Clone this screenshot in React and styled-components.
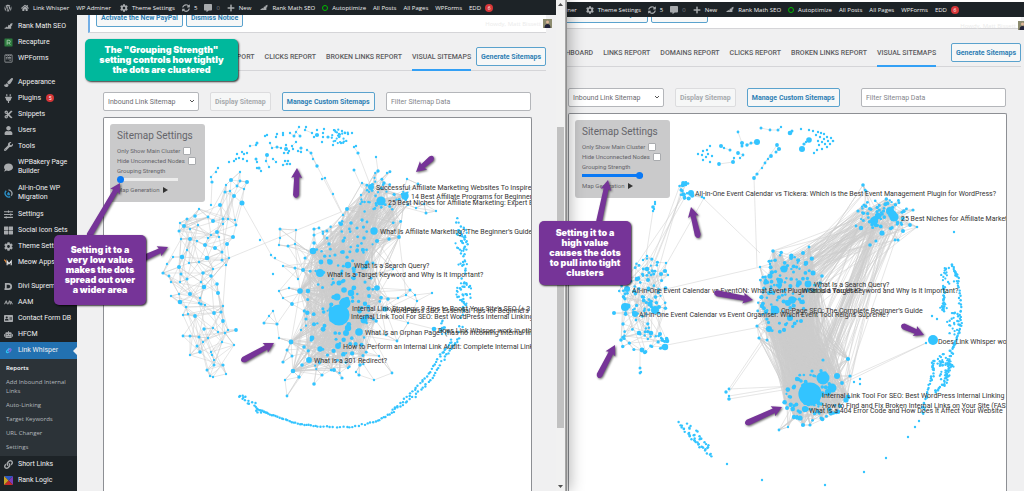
import React from 'react'
import styled, { createGlobalStyle, css } from 'styled-components'
import {
  FaWordpress,
  FaHome,
  FaCog,
  FaSyncAlt,
  FaCommentAlt,
  FaPlus,
  FaPaintBrush,
  FaPlug,
  FaCut,
  FaUser,
  FaWrench,
  FaComment,
  FaSlidersH,
  FaThLarge,
  FaRobot,
  FaLink,
  FaWpforms,
  FaAddressCard,
} from 'react-icons/fa'

const BLUE = '#33c4ff'
const PURPLE = '#763498'

const GlobalStyle = createGlobalStyle`
  * {
    box-sizing: border-box;
  }

  body {
    margin: 0;
    background: #fff;
    font-family: Roboto, 'Liberation Sans', sans-serif;
    font-size: 7px;
    color: #50575e;
  }

  a {
    color: inherit;
    text-decoration: none;
  }
`

const Desktop = styled.div`
  position: relative;
  display: flex;
  height: 100vh;
  min-height: 491px;
  overflow: hidden;
`

const FrontWindow = styled.section`
  position: relative;
  z-index: 1;
  flex: 0 0 566px;
  display: flex;
  flex-direction: column;
  min-width: 0;
  background: #f0f0f1;
  border-right: 1px solid #a6a6a6;
  box-shadow: 1px 0 0 #8f8f8f, 4px 0 14px rgba(0, 0, 0, 0.3);
`

const BackWindow = styled.section`
  flex: 1;
  display: flex;
  flex-direction: column;
  min-width: 0;
  overflow: hidden;
  padding-top: 2px;
  background: #fff;
`

const BackPage = styled.div`
  flex: 1;
  display: flex;
  flex-direction: column;
  min-height: 0;
  margin: 0 -7px 0 -24px;
`

const WindowBody = styled.div`
  flex: 1;
  display: flex;
  min-width: 0;
  min-height: 0;
`

const AdminBar = styled.header`
  display: flex;
  flex-shrink: 0;
  align-items: center;
  gap: 7px;
  height: 15px;
  padding: 0 4px 0 ${({ $clipped }) => ($clipped ? 0 : 4)}px;
  background: #1d2327;
  color: #f0f0f1;
  font-family: 'Open Sans', 'Noto Sans', sans-serif;
  font-size: 6px;
  white-space: nowrap;
`

const BarItem = styled.a`
  display: flex;
  align-items: center;
  gap: 4px;
  margin-left: ${({ $space }) => $space || 0}px;

  svg {
    color: #a7aaad;
    width: 8px;
    height: 8px;
  }
`

const Dim = styled.span`
  color: #7c8085;
`

const Ring = styled.span`
  width: 6px;
  height: 6px;
  border: 1px solid #0b0;
  border-radius: 50%;
`

const Badge = styled.span`
  display: inline-flex;
  align-items: center;
  justify-content: center;
  width: 8px;
  height: 8px;
  border-radius: 50%;
  background: #d63638;
  color: #fff;
  font-size: 5px;
`

const Sidebar = styled.nav`
  flex: 0 0 77px;
  padding-top: 3px;
  background: #1d2327;
  color: #f0f0f1;
`

const MenuLink = styled.a`
  display: flex;
  position: relative;
  align-items: center;
  gap: 5px;
  min-height: ${({ $active }) => ($active ? 17 : 16)}px;
  margin-top: ${({ $separated }) => ($separated ? 8 : 0)}px;
  padding: ${({ $wrap }) => ($wrap ? 4 : 3)}px 4px;
  line-height: 9px;
  white-space: ${({ $wrap }) => ($wrap ? 'normal' : 'nowrap')};

  > svg {
    flex-shrink: 0;
    width: 9px;
    height: 9px;
    color: #a7aaad;
  }

  ${({ $active }) =>
    $active &&
    css`
      background: #2271b1;

      &::after {
        content: '';
        position: absolute;
        right: 0;
        border: 4px solid transparent;
        border-right-color: #f0f0f1;
        border-left-width: 0;
      }
    `}
`

const Submenu = styled.div`
  padding: 3px 6px 1px;
  background: #2c3338;
  color: #b4b9be;
  font-family: 'Open Sans', 'Noto Sans', sans-serif;
  font-size: 6px;
`

const SubLink = styled.a`
  display: block;
  padding: 2px 0 3px;
  line-height: 9px;
  color: ${({ $current }) => ($current ? '#fff' : 'inherit')};
  font-weight: ${({ $current }) => ($current ? 600 : 400)};
`

const Main = styled.main`
  position: relative;
  flex: 1;
  display: flex;
  flex-direction: column;
  min-width: 0;
  background: #f0f0f1;
`

const Notice = styled.div`
  display: flex;
  flex-shrink: 0;
  align-items: flex-end;
  gap: 3px;
  height: ${({ $scrolled }) => ($scrolled ? 12 : 18)}px;
  margin: 0 10px 0 11px;
  padding: 0 0 5px 6px;
  overflow: hidden;
  background: #fff;
  border-left: 2px solid #72aee6;
  border-bottom: 1px solid #d5d5d8;
`

const Button = styled.button`
  flex-shrink: 0;
  height: 19px;
  padding: 0 4px;
  background: #f6f7f7;
  border: 1px solid #5aa2cd;
  border-radius: 2px;
  color: #2e7fb4;
  font: 700 7px Roboto, sans-serif;
  white-space: nowrap;

  &:disabled {
    border-color: #dcdcde;
    color: #a7aaad;
  }
`

const Account = styled.a`
  position: absolute;
  top: 4px;
  right: 4px;
  display: flex;
  align-items: center;
  gap: 2px;
  color: #ebebeb;
  font-family: 'Open Sans', sans-serif;
  font-size: 6px;
`

const TabRow = styled.div`
  display: flex;
  flex-shrink: 0;
  align-items: flex-start;
  justify-content: space-between;
  height: 24px;
  margin: 14px 10px 0;
  border-bottom: 1px solid #d5d5d8;
`

const Tabs = styled.nav`
  display: flex;
  gap: 10px;
  height: 24px;
  color: #5c5c60;
  font-weight: 500;
  line-height: 21px;
  white-space: nowrap;
`

const Tab = styled.a`
  border-bottom: 2px solid ${({ $active }) => ($active ? '#33a0f5' : 'transparent')};
`

const Controls = styled.form`
  display: flex;
  flex-shrink: 0;
  align-items: center;
  gap: 11px;
  margin: 21px 25px 0 26px;
`

const fieldStyle = css`
  height: 19px;
  background-color: #fff;
  border: 1px solid #b4b6ba;
  border-radius: 2px;
  color: #6b6b70;
  font: 400 7px Roboto, sans-serif;
`

const Select = styled.select`
  ${fieldStyle}
  width: 96px;
  padding: 0 4px;
  appearance: none;
`

const SelectBox = styled.div`
  position: relative;
  display: flex;

  svg {
    position: absolute;
    top: 7px;
    right: 4px;
  }
`

const Filter = styled.input`
  ${fieldStyle}
  width: 145px;
  margin-left: auto;
  padding: 0 4px;

  &::placeholder {
    color: #85868b;
  }
`

const MapFrame = styled.div`
  position: relative;
  flex: 1;
  min-height: 0;
  margin: 6px 24px 0 26px;
  overflow: hidden;
  background: #fff;
  border: 1px solid #8d8f94;
  border-bottom: 0;
  border-radius: 2px 2px 0 0;

  > svg {
    display: block;
    width: 100%;
    height: 100%;
  }
`

const Panel = styled.div`
  position: absolute;
  top: 6px;
  left: 6px;
  display: flex;
  flex-direction: column;
  width: 95px;
  height: 78px;
  padding: 6px 0 0 7px;
  background: #cacacb;
  border-radius: 3px;
  color: #65656a;
  font-size: 6px;
  line-height: 10px;
`

const PanelTitle = styled.h2`
  margin: 0 0 4px;
  font-size: 10px;
  font-weight: 400;
  line-height: 12px;
`

const CheckLabel = styled.label`
  display: flex;
  align-items: center;
  gap: 3px;
  height: 10px;

  input {
    appearance: none;
    width: 8px;
    height: 8px;
    margin: 0;
    background: #fff;
    border: 1px solid #a9abae;
    border-radius: 1px;
  }
`

const Strength = styled.label`
  display: flex;
  flex-direction: column;
`

const Range = styled.input`
  appearance: none;
  width: 61px;
  height: 7px;
  margin: 0;
  background: linear-gradient(${({ $full }) => ($full ? '#0a79f5' : '#ececec')} 0 0) center /
    100% 3px no-repeat;

  &::-webkit-slider-thumb {
    appearance: none;
    width: 7px;
    height: 7px;
    border-radius: 50%;
    background: #0a79f5;
  }
`

const Disclosure = styled.button`
  display: flex;
  align-items: center;
  gap: 4px;
  margin-top: 2px;
  padding: 0;
  background: none;
  border: 0;
  color: inherit;
  font: 400 6px/10px Roboto, sans-serif;
`

const Scrollbar = styled.div`
  flex: 0 0 9px;
  display: flex;
  flex-direction: column;
  align-items: center;
  padding: 3px 0;
  background: #f1f1f1;
`

const Thumb = styled.div`
  width: 7px;
  height: 62%;
  margin: 121px 0 auto;
  background: #c1c1c1;
`

const FrontColumn = styled.div`
  flex: 1;
  display: flex;
  flex-direction: column;
  min-width: 0;
`

const Callout = styled.p`
  position: absolute;
  z-index: 3;
  left: ${({ $x }) => $x}px;
  top: ${({ $y }) => $y}px;
  width: ${({ $width }) => $width}px;
  margin: 0;
  padding: ${({ $pad }) => $pad || 7}px 0;
  background: ${({ $color }) => $color};
  border-radius: 5px;
  box-shadow: 1px 1px 2px rgba(0, 0, 0, 0.8);
  color: #fff;
  font-family: Inter, 'DejaVu Sans', sans-serif;
  font-size: 9px;
  font-weight: 900;
  line-height: 10px;
  text-align: center;
  white-space: pre-line;
`

const ArrowLayer = styled.svg`
  position: absolute;
  z-index: 2;
  inset: 0;
  width: 100%;
  height: 100%;
  pointer-events: none;
  filter: drop-shadow(1px 1px 1px rgba(0, 0, 0, 0.6));
`

/* ---------- graph data ---------- */

const createRandom = seed => () => {
  seed = (seed * 1664525 + 1013904223) % 4294967296
  return seed / 4294967296
}

const parse = text =>
  text
    .trim()
    .split(/\s+/)
    .map(item => item.split(',').map(Number))

// random points in an ellipse, leaning towards the middle when bias > .5
const scatter = (random, count, cx, cy, rx, ry, maxR = 1.2, bias = 0.5) =>
  Array.from({ length: count }, () => {
    const angle = random() * Math.PI * 2
    const d = Math.pow(random(), bias)
    return [
      cx + Math.cos(angle) * rx * d,
      cy + Math.sin(angle) * ry * d,
      1.1 + random() * (maxR - 1.1),
    ]
  })

// points along a polyline
const trail = (random, points, count, spread) =>
  Array.from({ length: count }, (_, i) => {
    const t = (i / count) * (points.length - 1)
    const k = Math.floor(t)
    const [x1, y1] = points[k]
    const [x2, y2] = points[k + 1]
    return [
      x1 + (x2 - x1) * (t - k) + (random() - 0.5) * spread,
      y1 + (y2 - y1) * (t - k) + (random() - 0.5) * spread,
    ]
  })

const distance = (a, b) => Math.hypot(a[0] - b[0], a[1] - b[1])

const linkNear = (nodes, amount) =>
  nodes.flatMap(node =>
    [...nodes]
      .sort((a, b) => distance(a, node) - distance(b, node))
      .slice(1, amount + 1)
      .map(other => [node, other])
  )

const linkRandom = (random, from, to, count, max = 1000) => {
  const edges = []
  for (let i = 0; i < count; i++) {
    const a = from[Math.floor(random() * from.length)]
    const b = to[Math.floor(random() * to.length)]
    if (distance(a, b) < max) edges.push([a, b])
  }
  return edges
}

const parseEdges = text => parse(text).map(([a, b, c, d]) => [[a, b], [c, d]])

function buildSpreadGraph() {
  const random = createRandom(7)
  const arc = parse(`
    229,162 234,161 236,159 239,158 237,154 242,152 244,154 247,153 247,161 243,159 250,146
    256,145 257,143,1.5 265,136 267,135 270,143 272,148 277,147,1.5 267,155,2 256,159,1.5 257,162
    266,161 257,168 259,168,1.6 261,171 269,167 273,159 276,162 276,137 277,134 283,133 283,135
    281,148 286,149,2 286,145 292,146 293,149 288,153 289,151 284,153 283,165 287,164 288,161
    290,164 285,161 290,133 294,136,1.5 296,132 299,127 300,136,1.5 305,130 306,127 296,142
    301,148,1.6 298,151 301,152 307,150 311,153,1.5 313,159 317,166,1.7 322,179 325,178 333,194
    312,133 314,137 317,135,2.1 317,130 324,129 323,133 323,137 322,142 328,137,1.6 333,145
    341,143 348,134 352,133 218,168 216,172 211,177 212,182,1.6 211,205 345,133 342,131 339,134
    354,147 356,146 358,153,1.6 376,157 354,170,1.5 260,240 273,274 271,255 275,258
  `)
  const column = parse(`
    240,172 231,180,2 247,182,2 240,181,1.4 226,185 237,186,1.4 244,189 225,192,1.5 234,196,2
    230,191 242,203,2.5 220,205,2 199,209 195,216,1.8 187,219,1.5 180,223 184,226,2 190,229
    198,225 179,231,1.5 181,239 190,239,2 197,241 208,217,1.4 213,221,2 223,219,1.4 228,219
    235,220 223,224 236,225,1.4 217,232,2 211,235 219,237 233,237,2 208,238 205,245,2 215,248,2
    227,244,2 222,252,1.5 187,250 182,257,2.3 207,258,2.3 199,262 189,263 179,267,2 173,257
    167,264 163,273,1.6 169,276,1.4 171,282 181,274,1.5 171,296 180,282 187,279,1.5 190,294,2
    180,302,2.3 179,294 204,287,2.3 203,273,1.8 211,276,1.8 217,284,1.8 218,293,2 201,304,1.6
    205,305 200,298 223,306 222,260,1.5 229,258 226,265 213,269 201,282 186,307,1.3 195,316,1.9
    183,315 188,314 199,303 214,313,1.9 221,312,1.6 223,321,1.9 204,329,1.7 213,328 218,332
    225,333 228,330 236,330,1.9 234,345 183,336,1.4 190,336,1.5 199,337,1.5 208,338 222,342
    197,346,1.5 190,355 200,352,1.8 203,342 211,352 212,355 214,360 214,365,1.5 223,365,1.6
    226,374 207,370,1.5 210,376 213,377
  `)
  const hubs = parse(`
    339,315,10.5 320,273,4 313,251,3.3 348,265,3.2 330,262,2.8 321,262,2.4 337,297,3.5 344,290,2.8
    351,293,3.2 339,283,2.5 300,291,2.8 345,303,5.5 359,332,3.8 348,328,3.2 364,320,3.5
    338,346,2.9 309,360,2.9 291,342,2.4 320,349,2.7 312,338,2.4 293,371,2.3 346,333,3
    371,187,3 381,201,4.6 405,196,3.7 374,231,3.7 377,241,2.1 377,288,2.8 385,309,2.6
    341,224,2.1 347,209,2 303,270,2 351,223,1.8 363,250,2 364,238,1.8 399,237,1.9 369,296,1.9
  `)
  const leaves = parse(`
    343,215 357,228,1.6 280,229,1.5 296,230 314,229,1.6 319,228,1.4 314,235,1.5 314,243,1.8
    327,238,1.5 329,244,1.7 280,238 279,245 288,246,1.5 295,244 305,258,1.5 335,255,1.6 343,252,1.9
    357,251,1.8 295,268,1.5 283,266 298,279 279,291 289,288 283,298 292,304,1.9 378,171,1.7 387,173
    407,179 418,184,1.4 384,183,1.7 362,183 361,195 362,220,1.7 367,222,1.4 389,239,1.7 416,208
    426,213,1.5 436,211 424,204 373,263,1.6 393,269 388,299,1.8 398,298 406,295 415,295
    410,290,1.5 432,293 417,301 302,365,1.8 292,356,1.5 283,362,1.6 287,350,1.5 287,396,1.4
    285,380 299,377,1.7 314,384,1.8 322,375,1.6 334,370,2 342,378,1.6 359,375,1.6 356,372
    348,368 360,365,1.7 374,380 392,373,1.4 397,341,1.4 386,335 379,356 408,323 273,311
    269,316 264,323,1.5 277,324,1.6 279,338 304,347,1.8 301,330 306,319,1.6
  `)
  const fill = [
    ...scatter(random, 85, 341, 303, 41, 54, 2.4, 0.6),
    ...scatter(random, 34, 346, 248, 32, 28, 1.8),
    ...scatter(random, 44, 384, 200, 26, 30, 1.5),
    ...scatter(random, 18, 336, 356, 32, 20, 1.7),
  ]
  const outer = [
    ...scatter(random, 24, 340, 136, 9, 8),
    ...scatter(random, 30, 461, 238, 6, 17),
    ...scatter(random, 10, 463, 262, 5, 12),
    ...scatter(random, 32, 464, 294, 8, 13),
    ...scatter(random, 14, 443, 328, 6, 8),
    ...trail(random, [[457, 220], [466, 244], [463, 280], [464, 310], [459, 340]], 30, 5),
    ...trail(random, [[458, 340], [447, 354], [432, 378], [415, 396], [393, 411]], 36, 2),
    ...trail(random, [[452, 340], [441, 355], [427, 376], [411, 394], [391, 411]], 36, 2),
    ...trail(random, [[394, 412], [376, 422], [350, 427], [320, 427]], 27, 1.5),
    ...trail(random, [[320, 427], [295, 423], [272, 415], [255, 408]], 34, 1),
    ...trail(random, [[262, 412], [248, 402], [238, 395]], 18, 6),
  ]
  const body = [...hubs, ...leaves, ...fill]
  const core = [...hubs, ...fill]
  const upper = core.filter(n => n[1] < 260)
  const lower = core.filter(n => n[1] >= 240 && n[0] < 390)
  const edges = [
    ...linkNear(body, 2),
    ...linkRandom(random, leaves, hubs, 420, 60),
    ...linkRandom(random, lower, lower, 900, 75),
    ...linkRandom(random, lower, hubs.slice(0, 21), 800, 85),
    ...linkRandom(random, lower, hubs.slice(0, 1), 200),
    ...linkRandom(random, upper, hubs.slice(0, 16), 330, 125),
    ...linkRandom(random, upper, hubs.slice(22), 330, 62),
    ...linkNear(column, 2),
    ...linkRandom(random, column, column, 800, 42),
    ...linkNear(arc.slice(10, 64), 1),
    ...parseEdges(`
      242,203,273,258 273,258,295,268 229,258,341,212 317,166,341,212 333,194,343,215
      311,153,317,166 212,182,211,205 211,177,212,182 218,168,211,177 354,147,358,153
      358,153,371,187 376,157,378,171 354,170,362,188 236,330,225,333 342,306,434,329
      434,329,443,328 436,211,416,208
    `),
  ]
  return { nodes: [...arc, ...column, ...outer, ...fill, ...leaves, ...hubs, [434, 329, 2.3]], edges }
}

function buildTightGraph() {
  const random = createRandom(21)
  const top = parse(`
    698,154 703,151 710,146 707,150 702,155 712,156 703,160 708,154 706,157 710,162 719,164,1.9
    721,146,2 724,148 730,150,1.5 738,153,1.9 742,143,2 742,146,1.5 743,155,1.4 740,158 733,162,2
    734,158 747,145,1.7 751,143,1.5 757,142,3 738,132,1.4 761,128,1.5 770,130,1.4 778,130,1.5
    781,127 790,133,2.3 792,131,1.5 777,145,1.9 779,149,2.1 776,152,1.5 771,156,1.9 765,163,1.4
    762,168 757,174,1.6 754,178,1.9 768,159 801,129 809,130 813,131 818,132 821,133 824,134
    827,137 831,138 833,141,1.3 830,144 827,147 822,149 817,150 814,153 809,140,2.8 802,149,3
    804,144,1.6 806,142 816,135 820,137 824,139 828,141 818,141 822,142 825,144 819,145
    655,202 655,204 653,207,1.8 654,209 653,211 640,368,1.5 640,373,1.4 641,372 729,389,1.4
    726,392,1.7 729,396 729,399,1.8 727,464 908,437 915,427 919,421 886,458,1.2 864,472 825,485
    762,480 954,232 926,343 932,316 937,319 860,379 860,384 854,382
  `)
  const tiny = [
    ...scatter(random, 20, 687, 189, 8, 10, 2.2),
    ...parse('691,193,3 702,197 704,198 685,197 685,183,1.8'),
  ]
  const west = [
    ...scatter(random, 62, 643, 297, 26, 28, 1.9),
    ...scatter(random, 30, 645, 340, 26, 14, 1.8),
    ...scatter(random, 12, 646, 265, 12, 10, 1.6),
    ...parse(`
      627,289,3 635,314,3 625,307,4 628,306,2.6 655,310,4 650,304,2.6 659,307,2 639,333,2.3 651,333,2.3
      660,334,2 642,350,2.4 665,347,3.2 667,341,2.3 647,269,2.3 637,279,2.3 648,280,2 665,271,2.1
      661,274,2.1 621,340,1.8 623,324,1.7 614,313,2 647,256 643,260 668,275 666,263
    `),
  ]
  const middle = [
    ...scatter(random, 66, 790, 277, 33, 27, 2.2),
    ...scatter(random, 48, 781, 310, 24, 24, 2.2),
    ...parse(`
      784,269,3.5 808,284,3.4 799,283,2.8 775,310,4.3 792,300,3.8 788,303,3 769,329,3 790,318,3
      780,281,3 770,276,2.6 806,263,2.3 813,273,2.5 803,253,2 773,251,1.8 809,247,1.4 760,267,1.2
      762,306,2.2 757,326,1.6 759,338,1.6 767,340,1.5 822,276,1.8 801,321,2
    `),
  ]
  const east = [
    ...scatter(random, 55, 884, 214, 25, 17, 1.9),
    ...parse(`
      894,217,4.6 890,211,4 892,214,4 874,221,4 878,216,3.2 875,219,3 882,233,2.6 861,228,2.2
      903,231,2 898,240,1.6 895,240,1.4 870,245,1.8 876,241,1.6 864,205,1.6 913,210,1.6 917,227,1.3
      856,226,1.4 865,190,1.3 863,185,1.8 866,191,1.5 910,225,1.9 858,211,1.6
    `),
  ]
  const south = [
    ...scatter(random, 66, 815, 397, 31, 27, 2.3),
    ...parse(`
      810,394,11.6 823,378,6.5 832,388,4.5 828,392,3.2 805,409,3.1 837,376,3 848,359,2.1 823,360,1.6
      797,379,2.2 801,381,1.8 787,408,2 794,417,2.2 800,418,2.6 803,425,2.1 788,427 779,430,1.4
      846,400,2.6 848,397,2.4 840,406,2 812,371,1.6 842,383,1.9 850,376,1.6 810,425,1.6 821,418,1.6
    `),
  ]
  const outer = [
    ...scatter(random, 22, 949, 277, 9, 10),
    ...trail(random, [[944, 285], [944, 300], [943, 313]], 22, 2),
    ...scatter(random, 8, 944, 307, 4, 3),
    ...trail(random, [[951, 264], [958, 276], [960, 300], [961, 325], [956, 342], [950, 352]], 50, 2),
    ...scatter(random, 26, 954, 324, 7, 12),
    ...scatter(random, 55, 943, 367, 11, 13),
    ...trail(random, [[934, 360], [931, 378], [926, 398], [921, 415]], 30, 4),
    ...trail(random, [[952, 352], [947, 378], [935, 395]], 30, 5),
    ...trail(random, [[679, 423], [690, 436], [700, 446], [714, 457]], 28, 3),
    ...trail(random, [[688, 425], [700, 438], [709, 451]], 18, 6),
  ]
  const big = list => list.filter(n => n[2] > 1.7)
  const edges = [
    ...linkNear(west, 2),
    ...linkRandom(random, west, west, 150, 50),
    ...linkRandom(random, west, tiny, 7),
    ...linkNear(tiny, 3),
    ...linkNear(middle, 3),
    ...linkRandom(random, middle, big(middle), 550, 60),
    ...linkRandom(random, middle, big(south), 700),
    ...linkRandom(random, middle, south.slice(66, 70), 120),
    ...linkRandom(random, south, big(south), 450, 60),
    ...linkNear(south, 2),
    ...linkRandom(random, east, big(east), 150, 40),
    ...linkNear(east, 2),
    ...linkRandom(random, big(middle), east, 110),
    ...linkRandom(random, big(east), south, 60),
    ...linkNear(top.slice(10, 40), 1),
    ...parseEdges(`
      926,343,848,378 926,343,842,384 754,178,757,267 702,197,760,253 666,289,760,267
      667,345,760,327 729,389,762,340 729,392,765,340 729,396,795,385 729,399,795,388
      729,389,795,386 653,211,646,256 640,350,640,368 757,142,747,145 777,145,757,174
      866,190,870,205
    `),
  ]
  return { nodes: [...top, ...tiny, ...west, ...middle, ...east, ...outer, ...south, [933, 340, 5]], edges }
}

const SPREAD = {
  ...buildSpreadGraph(),
  origin: [104, 118],
  labels: [
    [376, 187, 'Successful Affiliate Marketing Websites To Inspire You'],
    [411, 196, '14 Best Affiliate Programs for Beginners'],
    [388, 202, '25 Best Niches for Affiliate Marketing: Expert Breakdown'],
    [380, 231, 'What Is Affiliate Marketing? The Beginner’s Guide'],
    [354, 265, 'What Is a Search Query?'],
    [327, 274, 'What Is a Target Keyword and Why Is It Important?'],
    [352, 308, 'Internal Link Strategy: 9 Tips to Boost Your Site’s SEO (+ 3 Things'],
    [390, 310, 'WordPress SEO: Essential Tips for Beginners'],
    [351, 316, 'Internal Link Tool For SEO: Best WordPress Internal Linking Plugin'],
    [438, 330, 'Does Link Whisper work in other languages'],
    [365, 332, 'What Is an Orphan Page? (has no incoming internal links)'],
    [343, 346, 'How to Perform an Internal Link Audit: Complete Internal Link Analysis'],
    [314, 360, 'What is a 301 Redirect?'],
  ],
}

const TIGHT = {
  ...buildTightGraph(),
  origin: [569, 114],
  labels: [
    [695, 193, 'All-in-One Event Calendar vs Tickera: Which is the Best Event Management Plugin for WordPress?'],
    [901, 218, '25 Best Niches for Affiliate Marketing: Expert'],
    [814, 284, 'What Is a Search Query?'],
    [632, 290, 'All-in-One Event Calendar vs EventON: What Event Plugin Should You Use?'],
    [802, 290, 'What Is a Target Keyword and Why Is It Important?'],
    [781, 310, 'On-Page SEO: The Complete Beginner’s Guide'],
    [639, 314, 'All-in-One Event Calendar vs Event Organiser: Which Event Tool Reigns Supreme?'],
    [938, 341, 'Does Link Whisper work in other languages'],
    [822, 395, 'Internal Link Tool For SEO: Best WordPress Internal Linking Plugin'],
    [822, 405, 'How to Find and Fix Broken Internal Links on Your Site (FAST)'],
    [809, 410, 'What Is a 404 Error Code and How Does It Affect Your Website'],
  ],
}

// tail x, tail y, tip x, tip y
const ARROWS = parse(`
  89,236,120,183 144,258,168,247 296,196,297,168 432,158,416,172 243,360,274,343
  599,222,608,180 698,236,691,207 716,293,753,300 599,376,615,345 903,326,924,335 747,423,782,407
`)

/* ---------- icons ---------- */

const RankMathIcon = () => (
  <svg viewBox="0 0 20 20" fill="currentColor">
    <path d="M1 15q0-3 3-3l2-2 2 2 2-6 3 1 1-3 5-2-1 6-2 1v6H2z" />
  </svg>
)

const RecaptureIcon = () => (
  <svg viewBox="0 0 20 20">
    <rect x="1" y="1" width="18" height="18" rx="1" fill="#2d7a3e" />
    <path d="M7 15V5h4a3 3 0 0 1 0 6H7m4 0 3 4" fill="none" stroke="#9fc9a6" strokeWidth="2" />
  </svg>
)

const MigrationIcon = () => (
  <svg viewBox="0 0 20 20" fill="none" strokeWidth="3">
    <path d="M10 2a8 8 0 0 1 6 13" stroke="#9aa0a6" />
    <path d="M14 17A8 8 0 0 1 5 4" stroke="#2a8fc7" />
    <path d="m7 10 3-4 3 4v4H8z" fill="#2a8fc7" stroke="none" />
  </svg>
)

const MeowIcon = () => (
  <svg viewBox="0 0 20 20" fill="none" strokeWidth="2.6">
    <path d="M0 4q3 0 5 6" stroke="#e58a3a" />
    <path d="M7 16V7l4 6 5-6v9" stroke="#e4e6e8" />
  </svg>
)

const DiviIcon = () => (
  <svg viewBox="0 0 20 20" fill="none" stroke="currentColor" strokeWidth="4">
    <path d="M4 14V4h6a6 6 0 0 1 0 12H1" />
  </svg>
)

const AamIcon = () => (
  <svg viewBox="0 0 20 20" fill="none" stroke="currentColor" strokeWidth="2">
    <path d="m1 14 4-8 3 8M3 11h4m2 3 3-8 2 8m1 0V7l4 7" />
  </svg>
)

const WhisperIcon = () => (
  <svg viewBox="0 0 20 20" fill="none" strokeWidth="2.6">
    <path d="m12 5-6 6q-2 4 2 4l3-2" stroke="#2fc4f4" />
    <path d="m9 11 5-5q3 1 1 4l-3 4" stroke="#8d6be0" />
  </svg>
)

const RankLogicIcon = () => (
  <svg viewBox="0 0 20 20">
    <path d="M0 0h20L10 10z" fill="#2b59c3" />
    <path d="M20 0v20L10 10z" fill="#7a3db8" />
    <path d="M0 20h20L10 10z" fill="#c62828" />
    <path d="M0 0v20l10-10z" fill="#c9a227" />
  </svg>
)

const AvatarIcon = () => (
  <svg width="9" height="9" viewBox="0 0 18 18">
    <rect width="18" height="18" fill="#8d8c6f" />
    <circle cx="9" cy="6" r="3" fill="#e0b69a" />
    <path d="M3 18q0-8 6-8t6 8z" fill="#23233a" />
  </svg>
)

const ArrowHead = ({ down }) => (
  <svg width="5" height="3" viewBox="0 0 5 3" fill="#505050">
    <path d={down ? 'M0 0h5L2.5 3z' : 'M0 3h5L2.5 0z'} />
  </svg>
)

/* ---------- sections ---------- */

const MENU_ITEMS = [
  { name: 'Rank Math SEO', icon: <RankMathIcon /> },
  { name: 'Recapture', icon: <RecaptureIcon /> },
  { name: 'WPForms', icon: <FaWpforms /> },
  { name: 'Appearance', icon: <FaPaintBrush />, separated: true },
  { name: 'Plugins', icon: <FaPlug />, badge: 5 },
  { name: 'Snippets', icon: <FaCut /> },
  { name: 'Users', icon: <FaUser /> },
  { name: 'Tools', icon: <FaWrench /> },
  { name: 'WPBakery Page Builder', icon: <FaComment />, wrap: true },
  { name: 'All-in-One WP Migration', icon: <MigrationIcon />, wrap: true },
  { name: 'Settings', icon: <FaSlidersH /> },
  { name: 'Social Icon Sets', icon: <FaThLarge /> },
  { name: 'Theme Settings', icon: <FaCog /> },
  { name: 'Meow Apps', icon: <MeowIcon /> },
  { name: 'Divi Supreme', icon: <DiviIcon />, separated: true },
  { name: 'AAM', icon: <AamIcon /> },
  { name: 'Contact Form DB', icon: <FaAddressCard /> },
  { name: 'HFCM', icon: <FaRobot /> },
  { name: 'Link Whisper', icon: <WhisperIcon />, active: true },
]

const LATER_ITEMS = [
  { name: 'Short Links', icon: <FaLink /> },
  { name: 'Rank Logic', icon: <RankLogicIcon /> },
]

const SUB_ITEMS = [
  'Reports',
  'Add Inbound Internal Links',
  'Auto-Linking',
  'Target Keywords',
  'URL Changer',
  'Settings',
]

const TABS = [
  'DASHBOARD',
  'LINKS REPORT',
  'DOMAINS REPORT',
  'CLICKS REPORT',
  'BROKEN LINKS REPORT',
  'VISUAL SITEMAPS',
]

const renderMenu = items =>
  items.map(({ name, icon, separated, badge, wrap, active }) => (
    <MenuLink key={name} href="#" $separated={separated} $wrap={wrap} $active={active}>
      {icon}
      <span>{name}</span>
      {badge && <Badge>{badge}</Badge>}
    </MenuLink>
  ))

function TopBar({ clipped }) {
  return (
    <AdminBar $clipped={clipped}>
      {!clipped && (
        <>
          <BarItem href="#" aria-label="WordPress">
            <FaWordpress />
          </BarItem>
          <BarItem href="#" $space={2}>
            <FaHome /> Link Whisper
          </BarItem>
        </>
      )}
      <BarItem href="#">WP Adminer</BarItem>
      <BarItem href="#" $space={2}>
        <FaCog /> Theme Settings
      </BarItem>
      <BarItem href="#">
        <FaSyncAlt /> 5
      </BarItem>
      <BarItem href="#">
        <FaCommentAlt /> <Dim>0</Dim>
      </BarItem>
      <BarItem href="#">
        <FaPlus /> New
      </BarItem>
      <BarItem href="#" $space={2}>
        <RankMathIcon /> Rank Math SEO
      </BarItem>
      <BarItem href="#">
        <Ring /> Autoptimize
      </BarItem>
      <BarItem href="#">All Posts</BarItem>
      <BarItem href="#">All Pages</BarItem>
      <BarItem href="#">WPForms</BarItem>
      <BarItem href="#">
        EDD <Badge>6</Badge>
      </BarItem>
    </AdminBar>
  )
}

function Graph({ nodes, edges, labels, origin }) {
  const d = edges
    .map(([a, b]) => `M${a[0].toFixed(1)} ${a[1].toFixed(1)}L${b[0].toFixed(1)} ${b[1].toFixed(1)}`)
    .join('')
  return (
    <svg>
      <g transform={`translate(${-origin[0]} ${-origin[1]})`}>
        <path d={d} stroke="#ccc" strokeWidth=".5" fill="none" />
        {nodes.map(([x, y, r = 1.2], index) => (
          <circle key={index} cx={x} cy={y} r={r} fill={BLUE} />
        ))}
        {labels.map(([x, y, text]) => (
          <text key={text} x={x} y={y + 3} fontFamily="Roboto" fontSize="7" fill="#333">
            {text}
          </text>
        ))}
      </g>
    </svg>
  )
}

function SitemapPage({ graph, strength, scrolled }) {
  return (
    <Main>
      <Notice $scrolled={scrolled}>
        <Button type="button">Activate the New PayPal</Button>
        <Button type="button">Dismiss Notice</Button>
      </Notice>
      <Account href="#">
        Howdy, Matt Bissett <AvatarIcon />
      </Account>
      <TabRow>
        <Tabs>
          {TABS.map(name => (
            <Tab key={name} href="#" $active={name === 'VISUAL SITEMAPS'}>
              {name}
            </Tab>
          ))}
        </Tabs>
        <Button type="button">Generate Sitemaps</Button>
      </TabRow>
      <Controls>
        <SelectBox>
          <Select aria-label="Sitemap type">
            <option>Inbound Link Sitemap</option>
          </Select>
          <svg width="6" height="5" viewBox="0 0 6 5" fill="none" stroke="#555">
            <path d="m1 1 2 2 2-2" />
          </svg>
        </SelectBox>
        <Button type="button" disabled>
          Display Sitemap
        </Button>
        <Button type="button">Manage Custom Sitemaps</Button>
        <Filter placeholder="Filter Sitemap Data" aria-label="Filter Sitemap Data" />
      </Controls>
      <MapFrame>
        <Graph {...graph} />
        <Panel>
          <PanelTitle>Sitemap Settings</PanelTitle>
          <CheckLabel>
            Only Show Main Cluster <input type="checkbox" />
          </CheckLabel>
          <CheckLabel>
            Hide Unconnected Nodes <input type="checkbox" />
          </CheckLabel>
          <Strength>
            Grouping Strength
            <Range type="range" defaultValue={strength} $full={strength === 100} />
          </Strength>
          <Disclosure type="button">
            Map Generation
            <svg width="5" height="6" viewBox="0 0 5 6" fill="#333">
              <path d="M0 0l5 3-5 3z" />
            </svg>
          </Disclosure>
        </Panel>
      </MapFrame>
    </Main>
  )
}

function Arrows() {
  return (
    <ArrowLayer fill={PURPLE}>
      {ARROWS.map(([x1, y1, x2, y2]) => {
        const length = Math.hypot(x2 - x1, y2 - y1)
        const angle = (Math.atan2(y2 - y1, x2 - x1) * 180) / Math.PI
        const neck = length - 9
        return (
          <path
            key={`${x1}-${y1}`}
            transform={`translate(${x1} ${y1}) rotate(${angle})`}
            d={`M1-3Q-2-2-2 0T1 3L${neck} 2.5L${neck - 1} 5.5L${length} 0L${neck - 1}-5.5L${neck}-2.5Z`}
          />
        )
      })}
    </ArrowLayer>
  )
}

function App() {
  return (
    <Desktop>
      <GlobalStyle />
      <FrontWindow>
        <WindowBody>
          <FrontColumn>
            <TopBar />
            <WindowBody>
              <Sidebar>
                {renderMenu(MENU_ITEMS)}
                <Submenu>
                  {SUB_ITEMS.map((name, index) => (
                    <SubLink key={name} href="#" $current={index === 0}>
                      {name}
                    </SubLink>
                  ))}
                </Submenu>
                {renderMenu(LATER_ITEMS)}
              </Sidebar>
              <SitemapPage graph={SPREAD} strength={0} />
            </WindowBody>
          </FrontColumn>
          <Scrollbar>
            <ArrowHead />
            <Thumb />
            <ArrowHead down />
          </Scrollbar>
        </WindowBody>
      </FrontWindow>
      <BackWindow>
        <BackPage>
          <TopBar clipped />
          <SitemapPage graph={TIGHT} strength={100} scrolled />
        </BackPage>
      </BackWindow>
      <Arrows />
      <Callout $x={85} $y={39} $width={153} $color="#00b89c" $pad={6}>
        {'The "Grouping Strength"\nsetting controls how tightly\nthe dots are clustered'}
      </Callout>
      <Callout $x={54} $y={235} $width={92} $color={PURPLE} $pad={10}>
        {'Setting it to a\nvery low value\nmakes the dots\nspread out over\na wider area'}
      </Callout>
      <Callout $x={539} $y={221} $width={92} $color={PURPLE}>
        {'Setting it to a\nhigh value\ncauses the dots\nto pull into tight\nclusters'}
      </Callout>
    </Desktop>
  )
}

export default App
